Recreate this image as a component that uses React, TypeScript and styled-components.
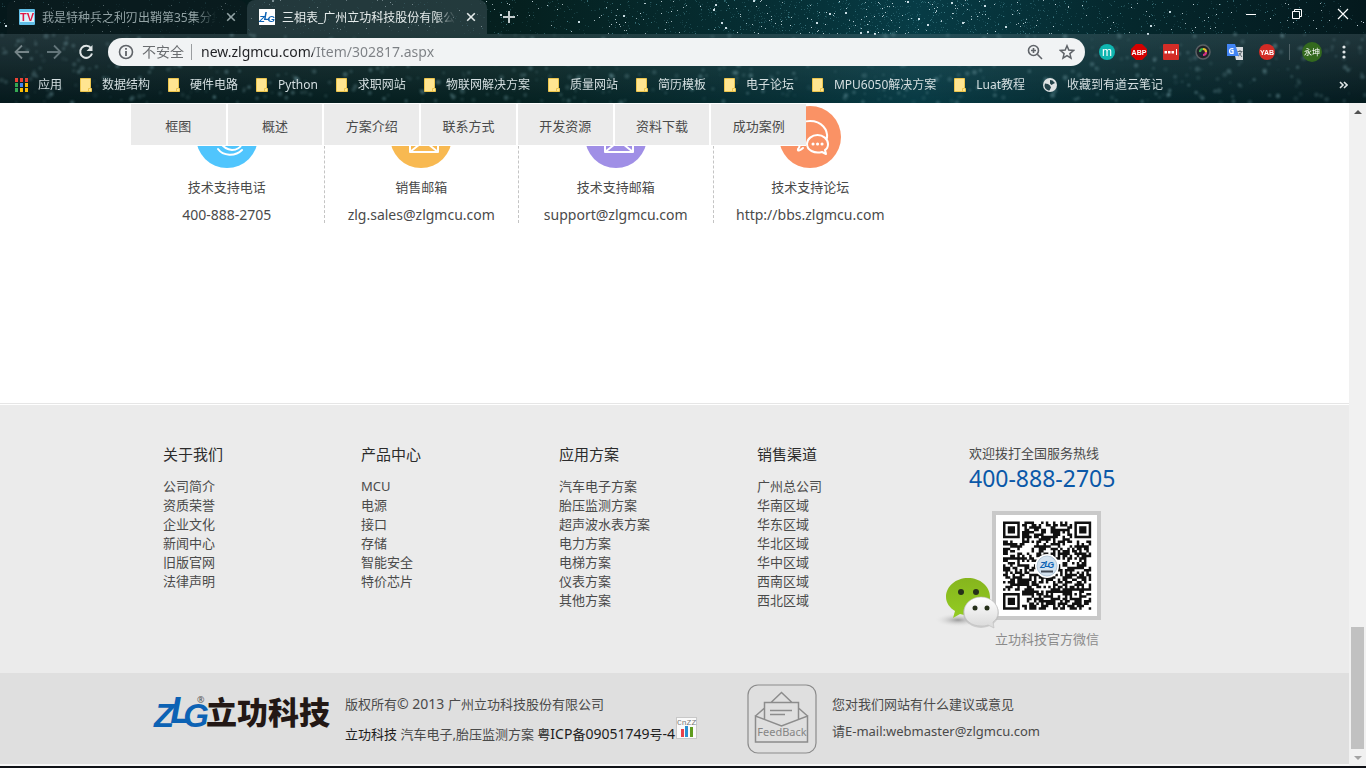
import React from "react";
import styled, { createGlobalStyle, css } from "styled-components";

const GlobalStyle = createGlobalStyle`
  * { box-sizing: border-box; }
  body {
    margin: 0;
    background: #fff;
    color: #4a4a4a;
    font-family: "Noto Sans", "Noto Sans CJK SC", sans-serif;
    font-size: 13px;
  }
  ul, p, h3 { margin: 0; padding: 0; font-weight: 400; list-style: none; }
  a { color: inherit; text-decoration: none; }
  button { margin: 0; padding: 0; border: 0; background: none; color: inherit; font: inherit; }
  svg { display: block; flex: none; }
`;

const Window = styled.div`
  display: flex;
  flex-direction: column;
  min-height: 100vh;
`;

/* ---------- browser frame ---------- */

const Chrome = styled.header`
  position: relative;
  overflow: hidden;
  background: linear-gradient(90deg, #05181b 0%, #05201f 38%, #063036 58%, #073c46 67%, #05282d 82%, #04191d 100%);
  color: #d5dfe1;
  font-size: 12px;
`;

const SkyArt = styled.svg`
  position: absolute;
  left: 0;
  top: 0;
  width: 100%;
  height: 100%;
`;

const TabStrip = styled.div`
  position: relative;
  display: flex;
  align-items: stretch;
  height: 34px;
  padding-left: 7px;
`;

const Tab = styled.div<{ $active?: boolean }>`
  display: flex;
  align-items: center;
  flex: none;
  width: 240px;
  padding: 0 8px 0 12px;
  gap: 7px;
  border-radius: 8px 8px 0 0;
  background: ${(p) => (p.$active ? "rgba(60, 80, 86, 0.55)" : "rgba(12, 28, 32, 0.6)")};
  color: ${(p) => (p.$active ? "#e6ecec" : "#93a3a5")};
`;

const TabTitle = styled.span`
  flex: 1;
  overflow: hidden;
  white-space: nowrap;
  mask-image: linear-gradient(90deg, #000 88%, transparent);
`;

const IconButton = styled.button<{ $width?: number }>`
  display: flex;
  align-items: center;
  justify-content: center;
  flex: none;
  width: ${(p) => p.$width ?? 32}px;
  height: 28px;
`;

const TabButton = styled(IconButton)`
  height: 34px;
`;

const WindowControls = styled.div`
  display: flex;
  margin-left: auto;
  color: #fff;
`;

const Toolbar = styled.div`
  position: relative;
  background: linear-gradient(rgba(110, 130, 138, 0.28), rgba(10, 40, 48, 0.1));
`;

const AddressRow = styled.div`
  display: flex;
  align-items: center;
  height: 36px;
  padding: 0 6px;
`;

const AddressBar = styled.div`
  display: flex;
  align-items: center;
  flex: 1;
  height: 28px;
  margin: 0 6px;
  padding: 0 2px 0 10px;
  border-radius: 14px;
  background: #f1f3f4;
  color: #6a6d70;
  font-size: 14px;
`;

const Unsafe = styled.span`
  margin-left: 8px;
  padding-right: 7px;
  border-right: 1px solid #9a9da0;
  line-height: 16px;
`;

const AddressInput = styled.input`
  flex: 1;
  min-width: 0;
  padding: 0 0 0 9px;
  border: 0;
  outline: 0;
  background: linear-gradient(90deg, #202124 121px, #7c8084 121px);
  background-clip: text;
  -webkit-text-fill-color: transparent;
  font: 14px/24px "Noto Sans", sans-serif;
`;

const Divider = styled.span`
  width: 1px;
  height: 16px;
  margin: 0 6px;
  background: #4f6368;
`;

const Bookmarks = styled.nav`
  display: flex;
  align-items: center;
  gap: 18px;
  height: 33px;
  padding: 0 18px 3px 15px;
`;

const Bookmark = styled.a`
  display: flex;
  align-items: center;
  gap: 10px;
  line-height: 18px;
  white-space: nowrap;
`;

const MoreButton = styled.button`
  margin-left: auto;
`;

/* ---------- page ---------- */

const Viewport = styled.div`
  display: flex;
  flex: 1;
`;

const Page = styled.main`
  display: flex;
  flex-direction: column;
  flex: 1;
  min-width: 0;
`;

const Container = styled.div`
  position: relative;
  width: 100%;
  max-width: 1089px;
  margin: 0 auto;
`;

const SectionNav = styled.nav`
  position: absolute;
  left: 1px;
  top: 0;
  display: flex;
  gap: 2px;
  width: 675px;
  padding: 1px 0;
  background: #fff;
`;

const SectionLink = styled.a`
  flex: 1;
  padding-top: 3px;
  line-height: 38px;
  background: #ebebeb;
  text-align: center;
`;

const Contacts = styled.div`
  display: flex;
  max-width: 778px;
  padding: 3px 0 180px;
`;

const Contact = styled.div`
  display: flex;
  flex: 1 0 0;
  flex-direction: column;
  align-items: center;
  border-right: 1px dashed #c4c4c4;
  &:last-child { border-color: transparent; }
`;

const ContactTitle = styled.p`
  margin: 9px 0 10px;
  line-height: 20px;
`;

const ContactValue = styled.a`
  font-size: 14px;
  line-height: 16px;
`;

const Footer = styled.footer`
  display: flex;
  flex: 1;
  flex-direction: column;
  border-top: 1px solid #e6e6e6;
  padding-top: 1px;
`;

const FooterTop = styled.div`
  flex: 1;
  background: #ebebeb;
`;

const Columns = styled(Container)`
  display: flex;
  padding: 39px 0 24px 33px;
`;

const LinkColumn = styled.section<{ $last?: boolean }>`
  flex: none;
  width: ${(p) => (p.$last ? 179 : 198)}px;
  line-height: 19px;
`;

const ColumnTitle = styled.h3`
  margin-bottom: 13px;
  color: #2b2b2b;
  font-size: 15px;
  line-height: 20px;
`;

const Hotline = styled.section`
  padding-left: 33px;
  line-height: 18px;
`;

const HotlineNumber = styled.p`
  margin: 1px 0 18px;
  color: #0a58a8;
  font-size: 23px;
  line-height: 30px;
`;

const WechatCard = styled.div`
  width: 166px;
  margin-left: -33px;
`;

const WechatCaption = styled.p`
  margin-top: 1px;
  padding-left: 59px;
  color: #8a8a8a;
`;

const FooterBottom = styled.div`
  border-bottom: 2px solid #f6f6f6;
  background: #dfdfdf;
`;

const Legal = styled(Container)`
  display: flex;
  align-items: flex-start;
  padding: 11px 0 10px 22px;
`;

const Brand = styled.a`
  display: block;
  margin-top: 7px;
`;

const Copy = styled.div<{ $width?: number }>`
  margin-left: 15px;
  white-space: nowrap;
  line-height: 20px;
  ${(p) => p.$width && css`width: ${p.$width}px;`}
`;

const CopyLine = styled.p<{ $gap: number }>`
  display: flex;
  align-items: flex-start;
  margin-top: ${(p) => p.$gap}px;
  white-space: pre;
`;

const Latin = styled.span`
  font-size: 14px;
`;

const Strong = styled.a`
  color: #1c1c1c;
`;

const StatsLink = styled.a`
  margin: -7px 0 0 1px;
`;

/* ---------- scroll bar and task bar ---------- */

const ScrollTrack = styled.div`
  display: flex;
  flex-direction: column;
  align-items: center;
  width: 17px;
  background: #f1f1f1;
`;

const ScrollSpace = styled.div`
  flex: 1;
`;

const ScrollThumb = styled.div`
  width: 13px;
  height: 122px;
  background: #c1c1c1;
`;

const ScrollArrow = styled.button`
  display: flex;
  align-items: center;
  justify-content: center;
  width: 17px;
  height: 17px;
`;

const Taskbar = styled.div`
  height: 2px;
  background: #101217;
`;

/* ---------- drawings ---------- */

function makeRandom(seed: number) {
  let s = seed;
  return () => {
    s = (s * 1664525 + 1013904223) % 4294967296;
    return s / 4294967296;
  };
}

function Sky() {
  const rnd = makeRandom(42);
  const sharp: React.ReactNode[] = [];
  const soft: React.ReactNode[] = [];
  for (let i = 0; i < 4200; i++) {
    const x = Math.floor(rnd() * 1366);
    const y = Math.floor(rnd() * 34);
    const density = 0.25 + 0.75 * Math.exp(-Math.pow((x - 880) / 230, 2));
    const keep = rnd() < density;
    const bright = rnd();
    if (keep)
      sharp.push(
        <rect key={i} x={x} y={y} width={bright > 0.985 ? 2 : 1} height={bright > 0.985 ? 2 : 1}
          fill={bright > 0.85 ? "#e4f4fa" : "#5ea6b2"} opacity={0.15 + bright * bright * bright * 0.75} />
      );
  }
  for (let i = 0; i < 700; i++) {
    const r = 1 + rnd() * 1.6;
    soft.push(
      <circle key={i} cx={rnd() * 1366} cy={34 + rnd() * 69} r={r} fill="#8fc0c9" opacity={0.08 + rnd() * 0.3} />
    );
  }
  return (
    <SkyArt viewBox="0 0 1366 103" preserveAspectRatio="xMidYMid slice" aria-hidden="true">
      <defs>
        <filter id="soft"><feGaussianBlur stdDeviation="1" /></filter>
      </defs>
      <g shapeRendering="crispEdges">{sharp}</g>
      <g filter="url(#soft)">{soft}</g>
    </SkyArt>
  );
}

const CloseIcon = () => (
  <svg width="16" height="16" viewBox="0 0 16 16" stroke="currentColor" strokeWidth="1.6">
    <path d="M4.2 4.2l7.6 7.6M11.8 4.2l-7.6 7.6" />
  </svg>
);

const FolderIcon = () => (
  <svg width="12" height="14" viewBox="0 0 12 14">
    <path d="M.5.5h10v9l1 1v3H.5z" fill="#ffe591" stroke="#edc54c" />
    <path d="M8.5 13.5V10.500h2" fill="none" stroke="#edc54c" />
  </svg>
);

const AppsIcon = () => {
  const colors = ["#ea4335", "#ea4335", "#ea4335", "#34a853", "#4285f4", "#fbbc05", "#34a853", "#fbbc05", "#fbbc05"];
  return (
    <svg width="13" height="14" viewBox="0 0 13 14">
      {colors.map((c, i) => (
        <rect key={i} x={(i % 3) * 5} y={Math.floor(i / 3) * 5} width="3" height="4" fill={c} />
      ))}
    </svg>
  );
};

const GlobeIcon = () => (
  <svg width="14" height="14" viewBox="0 0 14 14">
    <circle cx="7" cy="7" r="7" fill="#dfe3e4" />
    <path d="M2 5.500l3 .5 2 1.500 1 2-1.500 3C3.500 12.500 1.500 10 1.500 7.500zM7 2l2.500.5L12 5l-2 1-1.500 1L7 5.500z" fill="#24434a" />
  </svg>
);

const MarkLogo = () => (
  <text x="0" y="33" fontFamily="Liberation Sans, sans-serif" fontWeight="700" fontStyle="italic" fontSize="33" fill="#0c62b4">
    Z<tspan dx="-4" dy="-4" fontSize="36">L</tspan><tspan dx="-9" dy="4">G</tspan>
  </text>
);

const TabLogo = () => (
  <svg width="16" height="16" viewBox="0 0 16 16">
    <rect width="16" height="16" fill="#fff" />
    <g transform="translate(0 3) scale(.29)"><MarkLogo /></g>
  </svg>
);

const TvIcon = () => (
  <svg width="16" height="16" viewBox="0 0 16 16">
    <rect width="16" height="16" rx="1" fill="#62bfe8" />
    <rect x="1" y="3" width="14" height="10" fill="#d9f2fc" />
    <text x="8" y="12" textAnchor="middle" fontFamily="Liberation Sans, sans-serif" fontWeight="700" fontSize="11" fill="#e01846">TV</text>
  </svg>
);

const BadgeText = ({ size, children, y = 11, weight = 700 }: { size: number; children: string; y?: number; weight?: number }) => (
  <text x="8" y={y} textAnchor="middle" fontFamily="Liberation Sans, sans-serif" fontWeight={weight} fontSize={size} fill="#fff">
    {children}
  </text>
);

const extensions: { name: string; art: React.ReactNode }[] = [
  { name: "m", art: <><circle cx="8" cy="8" r="8" fill="#0fb5b0" /><BadgeText size={12} y={12} weight={400}>m</BadgeText></> },
  { name: "Adblock", art: <><path d="M5 0h6l5 5v6l-5 5H5l-5-5V5z" fill="#d40000" /><BadgeText size={7}>ABP</BadgeText></> },
  { name: "Password", art: <><rect width="16" height="16" rx="1" fill="#d32d27" /><path d="M1.500 7h2.500v2.500H1.500zM5 7h2.500v2.500H5zM8.500 7H11v2.500H8.500zM13 5h1v6h-1z" fill="#fff" /></> },
  {
    name: "Camera",
    art: <>
      <circle cx="8" cy="8" r="7" fill="#202328" stroke="#5b6065" strokeWidth="1.500" />
      <g fill="none" strokeWidth="2.200">
        <path d="M5 8A3 3 0 0 1 8 5" stroke="#3fae49" />
        <path d="M8 5A3 3 0 0 1 11 8" stroke="#e8c02c" />
        <path d="M11 8A3 3 0 0 1 8 11" stroke="#d63384" />
        <path d="M8 11A3 3 0 0 1 5 8" stroke="#142a3c" />
      </g>
    </>,
  },
  {
    name: "Translate",
    art: <>
      <path d="M6 3h10v13H9z" fill="#d9dcdf" />
      <path d="M0 0h8l4 12H0z" fill="#4285f4" />
      <text x="1.500" y="9.500" fontFamily="Noto Sans, sans-serif" fontWeight="700" fontSize="8" fill="#fff">G</text>
      <path d="M10.500 7.500h5M13 6v1.500M14.500 7.500c-.5 2-2 4-3 4.500M12 9l3 4" stroke="#5e6a70" fill="none" />
    </>,
  },
  { name: "YAB", art: <><circle cx="8" cy="8" r="8" fill="#d32b25" /><BadgeText size={7}>YAB</BadgeText></> },
];

function ContactIcon({ kind, color }: { kind: string; color: string }) {
  return (
    <svg width="62" height="62" viewBox="0 0 62 62" fill="none" stroke="#fff" strokeWidth="2" strokeLinejoin="round" strokeLinecap="round">
      <circle cx="31" cy="31" r="31" fill={color} stroke="none" />
      {kind === "phone" && (
        <path d="M20 22c-1 10 6 21 16 22 5 0 9-3 9-5-1-3-4-4-6-3l-3 3c-4-1-8-5-9-9M22 43c5 7 17 8 24 1" />
      )}
      {kind === "mail" && (
        <path d="M20 22h28v24H20zM20 46l10-8h8l10 8M20 24l14 12 14-12" />
      )}
      {kind === "forum" && (
        <>
          <path d="M24 42c-2 2-6 4-5 1 2-2 2-4 0-6-8-13 1-22 12-22 12 0 18 9 17 17" />
          <path d="M28 38c0-5 5-9 10.500-9S49 33 49 38c0 3-1 5-3 6l1 4-4-2c-8 2-15-2-15-8z" fill={color} />
          <path d="M34 38h.1M38.500 38h.1M43 38h.1" strokeWidth="3" />
        </>
      )}
    </svg>
  );
}

function QrModules() {
  const n = 37;
  const rnd = makeRandom(2013);
  let d = "";
  const finders = [[0, 0], [n - 7, 0], [0, n - 7]];
  for (let y = 0; y < n; y++) {
    for (let x = 0; x < n; x++) {
      let dark = rnd() < 0.54;
      for (const [fx, fy] of finders) {
        const dx = x - fx, dy = y - fy;
        if (dx >= -1 && dx <= 7 && dy >= -1 && dy <= 7) {
          const ring = Math.max(Math.abs(dx - 3), Math.abs(dy - 3));
          dark = ring === 3 || ring <= 1;
        }
      }
      const align = Math.max(Math.abs(x - 30), Math.abs(y - 30));
      if (align <= 2) dark = align !== 1;
      if (dark) d += `M${x} ${y}h1.050v1.050h-1.050z`;
    }
  }
  return <path d={d} fill="#111" transform="translate(67 10.500) scale(2.380)" />;
}

const WechatQr = () => (
  <svg width="166" height="118" viewBox="0 0 166 118">
    <defs>
      <radialGradient id="shade"><stop offset="0" stopColor="#9a9a9a" /><stop offset="1" stopColor="#ebebeb" stopOpacity="0" /></radialGradient>
      <linearGradient id="green" x2="0" y2="1"><stop offset="0" stopColor="#86b51d" /><stop offset="1" stopColor="#93cc22" /></linearGradient>
      <linearGradient id="pearl" x2="0" y2="1"><stop offset="0" stopColor="#fff" /><stop offset="1" stopColor="#d9d9d9" /></linearGradient>
    </defs>
    <rect x="58" y="2" width="105" height="105" fill="#fff" stroke="#c9c9c9" strokeWidth="4" />
    <QrModules />
    <circle cx="111" cy="55" r="12" fill="#fff" />
    <circle cx="111" cy="55" r="10" fill="#d3e2ef" stroke="#b4c8da" />
    <g transform="translate(104 48) scale(.26)"><MarkLogo /></g>
    <path d="M105 60.500h12" stroke="#3d4652" strokeWidth="2" />
    <ellipse cx="22" cy="109" rx="24" ry="7" fill="url(#shade)" />
    <path d="M32 67c12 0 22 8 22 19s-10 18-22 18c-3 0-5 0-8-1l-7 4 2-7C14 97 10 92 10 86c0-11 10-19 22-19z" fill="url(#green)" />
    <ellipse cx="45" cy="102" rx="18" ry="15" fill="#b9b9b9" opacity=".6" />
    <path d="M45 86c10 0 17 7 17 15 0 5-2 8-5 10l1 6-6-3c-2 1-5 1-7 1-10 0-17-6-17-14s7-15 17-15z" fill="url(#pearl)" stroke="#bcbcbc" strokeWidth=".6" />
    <g fill="#26301a"><circle cx="25" cy="81" r="3" /><circle cx="40" cy="81" r="3" /><circle cx="39" cy="97" r="2.500" /><circle cx="51" cy="97" r="2.500" /></g>
  </svg>
);

const CompanyLogo = () => (
  <svg width="178" height="38" viewBox="0 0 178 38">
    <g transform="translate(2 3)"><MarkLogo /></g>
    <text x="45" y="12" fontFamily="Noto Sans, sans-serif" fontSize="9" fill="#555">®</text>
    <text x="54" y="33" fontFamily="Noto Sans CJK SC, sans-serif" fontWeight="900" fontSize="31" fill="#231815">立功科技</text>
  </svg>
);

const StatsIcon = () => (
  <svg width="21" height="22" viewBox="0 0 21 22">
    <rect x=".5" y=".5" width="20" height="21" fill="#fafafa" stroke="#c8c8c8" />
    <text x="1" y="8" fontFamily="Liberation Mono, monospace" fontSize="8" fill="#777">CnZZ</text>
    <path d="M5 12h3v8H5z" fill="#e8404a" /><path d="M9 9h3v11H9z" fill="#2a8fd0" /><path d="M14 10h3v10h-3z" fill="#5f9c1f" />
  </svg>
);

const FeedbackIcon = () => (
  <svg width="70" height="70" viewBox="0 0 70 70" fill="none" stroke="#8c8c8c" strokeWidth="1.500">
    <rect x="1" y="1" width="68" height="68" rx="10" strokeWidth="1.200" />
    <path d="M8.500 32v26h52V32L34.500 42zM8.500 32l9-8M60.500 32l-9-8M17.500 36V18.500h34V36M24 18.500l10.500-10 10.500 10" />
    <path d="M23 26.500h22M23 30.500h15" />
    <text x="35" y="52" textAnchor="middle" fontFamily="Noto Sans, sans-serif" fontSize="11" fill="#858585" stroke="none">FeedBack</text>
  </svg>
);

/* ---------- data ---------- */

const bookmarks = ["数据结构", "硬件电路", "Python", "求职网站", "物联网解决方案", "质量网站", "简历模板", "电子论坛", "MPU6050解决方案", "Luat教程"];
const sections = ["框图", "概述", "方案介绍", "联系方式", "开发资源", "资料下载", "成功案例"];
const contacts = [
  { kind: "phone", color: "#50c5fd", title: "技术支持电话", value: "400-888-2705" },
  { kind: "mail", color: "#f8b951", title: "销售邮箱", value: "zlg.sales@zlgmcu.com" },
  { kind: "mail", color: "#a08fe6", title: "技术支持邮箱", value: "support@zlgmcu.com" },
  { kind: "forum", color: "#fa9265", title: "技术支持论坛", value: "http://bbs.zlgmcu.com" },
];
const columns = [
  { title: "关于我们", links: ["公司简介", "资质荣誉", "企业文化", "新闻中心", "旧版官网", "法律声明"] },
  { title: "产品中心", links: ["MCU", "电源", "接口", "存储", "智能安全", "特价芯片"] },
  { title: "应用方案", links: ["汽车电子方案", "胎压监测方案", "超声波水表方案", "电力方案", "电梯方案", "仪表方案", "其他方案"] },
  { title: "销售渠道", links: ["广州总公司", "华南区域", "华东区域", "华北区域", "华中区域", "西南区域", "西北区域"] },
];

function BrowserFrame() {
  return (
    <Chrome>
      <Sky />
      <TabStrip>
        <Tab>
          <TvIcon />
          <TabTitle>我是特种兵之利刃出鞘第35集分集</TabTitle>
          <TabButton $width={16} aria-label="关闭"><CloseIcon /></TabButton>
        </Tab>
        <Tab $active>
          <TabLogo />
          <TabTitle>三相表_广州立功科技股份有限公司</TabTitle>
          <TabButton $width={16} aria-label="关闭"><CloseIcon /></TabButton>
        </Tab>
        <TabButton $width={44} aria-label="新标签页">
          <svg width="16" height="16" viewBox="0 0 16 16" stroke="#c3cccd" strokeWidth="2"><path d="M8 2v12M2 8h12" /></svg>
        </TabButton>
        <WindowControls>
          <IconButton $width={46} aria-label="最小化">
            <svg width="10" height="10" viewBox="0 0 10 10" stroke="currentColor"><path d="M0 5.500h10" /></svg>
          </IconButton>
          <IconButton $width={46} aria-label="还原">
            <svg width="10" height="10" viewBox="0 0 10 10" stroke="currentColor" fill="none"><path d="M.5 2.500h7v7h-7zM2.500 2.500v-2h7v7h-2" /></svg>
          </IconButton>
          <IconButton $width={46} aria-label="关闭窗口">
            <svg width="12" height="12" viewBox="0 0 12 12" stroke="currentColor" strokeWidth="1.200"><path d="M1 1l10 10M11 1L1 11" /></svg>
          </IconButton>
        </WindowControls>
      </TabStrip>
      <Toolbar>
        <AddressRow>
          <IconButton aria-label="后退">
            <svg width="16" height="16" viewBox="0 0 16 16" fill="none" stroke="#768589" strokeWidth="1.800"><path d="M15 8H2M8 1.500L1.500 8 8 14.500" /></svg>
          </IconButton>
          <IconButton aria-label="前进">
            <svg width="16" height="16" viewBox="0 0 16 16" fill="none" stroke="#63757a" strokeWidth="1.800"><path d="M1 8h13M8 1.500L14.500 8 8 14.500" /></svg>
          </IconButton>
          <IconButton aria-label="重新加载">
            <svg width="16" height="16" viewBox="0 0 16 16" fill="none" stroke="#dfe5e6" strokeWidth="2"><path d="M13 4.200A6 6 0 1 0 14 9.500" /><path d="M14.500 1v6h-6z" fill="#dfe5e6" stroke="none" /></svg>
          </IconButton>
          <AddressBar>
            <svg width="16" height="16" viewBox="0 0 16 16" fill="none" stroke="#5f6368" strokeWidth="1.600"><circle cx="8" cy="8" r="6.500" /><path d="M8 7v5M8 4v1.800" strokeWidth="1.800" /></svg>
            <Unsafe>不安全</Unsafe>
            <AddressInput aria-label="地址" defaultValue="new.zlgmcu.com/Item/302817.aspx" />
            <IconButton aria-label="缩放">
              <svg width="16" height="16" viewBox="0 0 16 16" fill="none" stroke="#5f6368" strokeWidth="1.600"><circle cx="6.500" cy="6.500" r="5" /><path d="M10.300 10.300l4.700 4.700M4 6.500h5M6.500 4v5" /></svg>
            </IconButton>
            <IconButton aria-label="收藏">
              <svg width="16" height="16" viewBox="0 0 16 16" fill="none" stroke="#5f6368" strokeWidth="1.500"><path d="M8 1.800l1.800 4.300 4.700.4-3.600 3.100 1.100 4.600L8 11.700l-4 2.500 1.100-4.600L1.500 6.500l4.700-.4z" /></svg>
            </IconButton>
          </AddressBar>
          {extensions.map((e) => (
            <IconButton key={e.name} aria-label={e.name}>
              <svg width="16" height="16" viewBox="0 0 16 16">{e.art}</svg>
            </IconButton>
          ))}
          <Divider />
          <IconButton aria-label="用户">
            <svg width="20" height="20" viewBox="0 0 20 20">
              <circle cx="10" cy="10" r="10" fill="#33691e" />
              <text x="10" y="13" textAnchor="middle" fontFamily="Noto Sans CJK SC, sans-serif" fontSize="8" fill="#fff">永坤</text>
            </svg>
          </IconButton>
          <IconButton aria-label="菜单">
            <svg width="4" height="14" viewBox="0 0 4 14" fill="#dfe5e6"><circle cx="2" cy="2" r="1.600" /><circle cx="2" cy="7" r="1.600" /><circle cx="2" cy="12" r="1.600" /></svg>
          </IconButton>
        </AddressRow>
        <Bookmarks>
          <Bookmark href="#"><AppsIcon />应用</Bookmark>
          {bookmarks.map((b) => (
            <Bookmark key={b} href="#"><FolderIcon />{b}</Bookmark>
          ))}
          <Bookmark href="#"><GlobeIcon />收藏到有道云笔记</Bookmark>
          <MoreButton aria-label="更多书签">
            <svg width="9" height="8" viewBox="0 0 9 8" fill="none" stroke="#dfe5e6" strokeWidth="1.600"><path d="M1 1l3 3-3 3M5 1l3 3-3 3" /></svg>
          </MoreButton>
        </Bookmarks>
      </Toolbar>
    </Chrome>
  );
}

export default function App() {
  return (
    <Window>
      <GlobalStyle />
      <BrowserFrame />
      <Viewport>
        <Page>
          <Container>
            <Contacts>
              {contacts.map((c) => (
                <Contact key={c.title}>
                  <ContactIcon kind={c.kind} color={c.color} />
                  <ContactTitle>{c.title}</ContactTitle>
                  <ContactValue href="#">{c.value}</ContactValue>
                </Contact>
              ))}
            </Contacts>
            <SectionNav>
              {sections.map((s) => (
                <SectionLink key={s} href="#">{s}</SectionLink>
              ))}
            </SectionNav>
          </Container>
          <Footer>
            <FooterTop>
              <Columns>
                {columns.map((c, i) => (
                  <LinkColumn key={c.title} $last={i === columns.length - 1}>
                    <ColumnTitle>{c.title}</ColumnTitle>
                    <ul>
                      {c.links.map((l) => (
                        <li key={l}><a href="#">{l}</a></li>
                      ))}
                    </ul>
                  </LinkColumn>
                ))}
                <Hotline>
                  <p>欢迎拨打全国服务热线</p>
                  <HotlineNumber>400-888-2705</HotlineNumber>
                  <WechatCard>
                    <WechatQr />
                    <WechatCaption>立功科技官方微信</WechatCaption>
                  </WechatCard>
                </Hotline>
              </Columns>
            </FooterTop>
            <FooterBottom>
              <Legal>
                <Brand href="#" aria-label="立功科技"><CompanyLogo /></Brand>
                <Copy $width={402}>
                  <CopyLine $gap={10}>版权所有<Latin>© 2013 </Latin>广州立功科技股份有限公司</CopyLine>
                  <CopyLine $gap={10}>
                    <Strong href="#">立功科技</Strong> 汽车电子,胎压监测方案{" "}
                    <Strong href="#">粤<Latin>ICP</Latin>备<Latin>09051749</Latin>号<Latin>-4</Latin></Strong>
                    <StatsLink href="#" aria-label="站长统计"><StatsIcon /></StatsLink>
                  </CopyLine>
                </Copy>
                <FeedbackIcon />
                <Copy>
                  <CopyLine $gap={10}>您对我们网站有什么建议或意见</CopyLine>
                  <CopyLine $gap={7}>请E-mail:webmaster@zlgmcu.com</CopyLine>
                </Copy>
              </Legal>
            </FooterBottom>
          </Footer>
        </Page>
        <ScrollTrack>
          <ScrollArrow aria-label="向上滚动">
            <svg width="8" height="4" viewBox="0 0 8 4" fill="#505050"><path d="M0 4l4-4 4 4z" /></svg>
          </ScrollArrow>
          <ScrollSpace />
          <ScrollThumb />
          <ScrollArrow aria-label="向下滚动">
            <svg width="8" height="4" viewBox="0 0 8 4" fill="#a3a3a3"><path d="M0 0l4 4 4-4z" /></svg>
          </ScrollArrow>
        </ScrollTrack>
      </Viewport>
      <Taskbar />
    </Window>
  );
}
